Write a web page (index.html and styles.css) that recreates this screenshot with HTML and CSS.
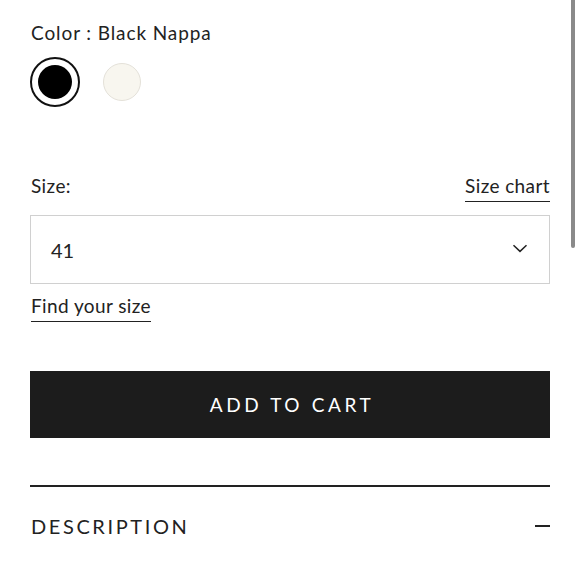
FILE: index.html
```html
<!DOCTYPE html>
<html lang="en">
<head>
<meta charset="utf-8">
<title>Product options</title>
<link rel="stylesheet" href="styles.css">
</head>
<body>
<div class="page">
  <div class="color-label">Color : Black Nappa</div>
  <div class="swatches">
    <button class="swatch swatch-selected" aria-label="Black Nappa"><span class="swatch-fill black"></span></button>
    <button class="swatch swatch-plain cream" aria-label="Cream"></button>
  </div>

  <div class="size-row">
    <span class="size-label">Size:</span>
    <a class="link" href="#">Size chart</a>
  </div>
  <div class="select">
    <span class="select-value">41</span>
    <svg class="chevron" width="16" height="9" viewBox="0 0 16 9"><path d="M1.5 1.2 L8 7.4 L14.5 1.2" fill="none" stroke="#222" stroke-width="1.5"/></svg>
  </div>
  <div class="find-row"><a class="link" href="#">Find your size</a></div>

  <button class="add-to-cart">ADD TO CART</button>

  <div class="accordion">
    <span class="accordion-title">DESCRIPTION</span>
    <span class="minus"></span>
  </div>
</div>
<div class="scrollbar"></div>
</body>
</html>
```
FILE: styles.css
```css
html, body {
  margin: 0;
  padding: 0;
  background: #fff;
}
body {
  font-family: "Lato", "Noto Sans", sans-serif;
  color: #222;
  overflow: hidden;
}
.page {
  padding: 21px 30px 0 30px;
}
.color-label {
  font-size: 19px;
  line-height: 24px;
  letter-spacing: 0.9px;
  padding-left: 1px;
}
.swatches {
  display: flex;
  align-items: center;
  gap: 23px;
  margin-top: 12px;
  height: 50px;
}
.swatch {
  padding: 0;
  margin: 0;
  border-radius: 50%;
  background: #fff;
  box-sizing: border-box;
}
.swatch-selected {
  width: 50px;
  height: 50px;
  border: 2px solid #111;
  display: flex;
  align-items: center;
  justify-content: center;
}
.swatch-fill {
  display: block;
  width: 34px;
  height: 34px;
  border-radius: 50%;
}
.black { background: #000; }
.swatch-plain {
  width: 38px;
  height: 38px;
  border: 1px solid #e4e1d9;
}
.cream { background: #f8f6ef; }

.size-row {
  display: flex;
  justify-content: space-between;
  align-items: flex-start;
  margin-top: 67px;
  font-size: 19px;
  line-height: 24px;
}
.size-label { padding-left: 1px; letter-spacing: 0.4px; }
.link {
  color: #222;
  text-decoration: none;
  border-bottom: 1.5px solid #222;
  padding-bottom: 3px;
  font-size: 19px;
  line-height: 24px;
  letter-spacing: 0.4px;
  display: inline-block;
}
.select {
  margin-top: 13px;
  height: 69px;
  box-sizing: border-box;
  border: 1px solid #d0d0d0;
  display: flex;
  align-items: center;
  justify-content: space-between;
  padding: 0 21px 0 20px;
}
.select-value {
  font-size: 20px;
  line-height: 24px;
}
.chevron { display: block; margin-top: -2px; }
.find-row {
  margin-top: 10px;
  padding-left: 1px;
}
.add-to-cart {
  display: block;
  width: 100%;
  height: 67px;
  margin-top: 49px;
  border: none;
  background: #1c1c1c;
  color: #fff;
  font-family: "Lato", "Noto Sans", sans-serif;
  font-size: 19px;
  letter-spacing: 3.6px;
  padding: 0 0 0 4px;
}
.accordion {
  margin-top: 47px;
  border-top: 2px solid #222;
  height: 78px;
  display: flex;
  align-items: center;
  justify-content: space-between;
}
.accordion-title {
  font-size: 20px;
  letter-spacing: 2.6px;
  padding-left: 1px;
}
.minus {
  display: block;
  width: 15px;
  height: 1.5px;
  background: #222;
}
.scrollbar {
  position: absolute;
  top: 0;
  left: 571px;
  width: 4px;
  height: 248px;
  background: #8a8a8a;
  border-radius: 0 0 2px 2px;
}
```
